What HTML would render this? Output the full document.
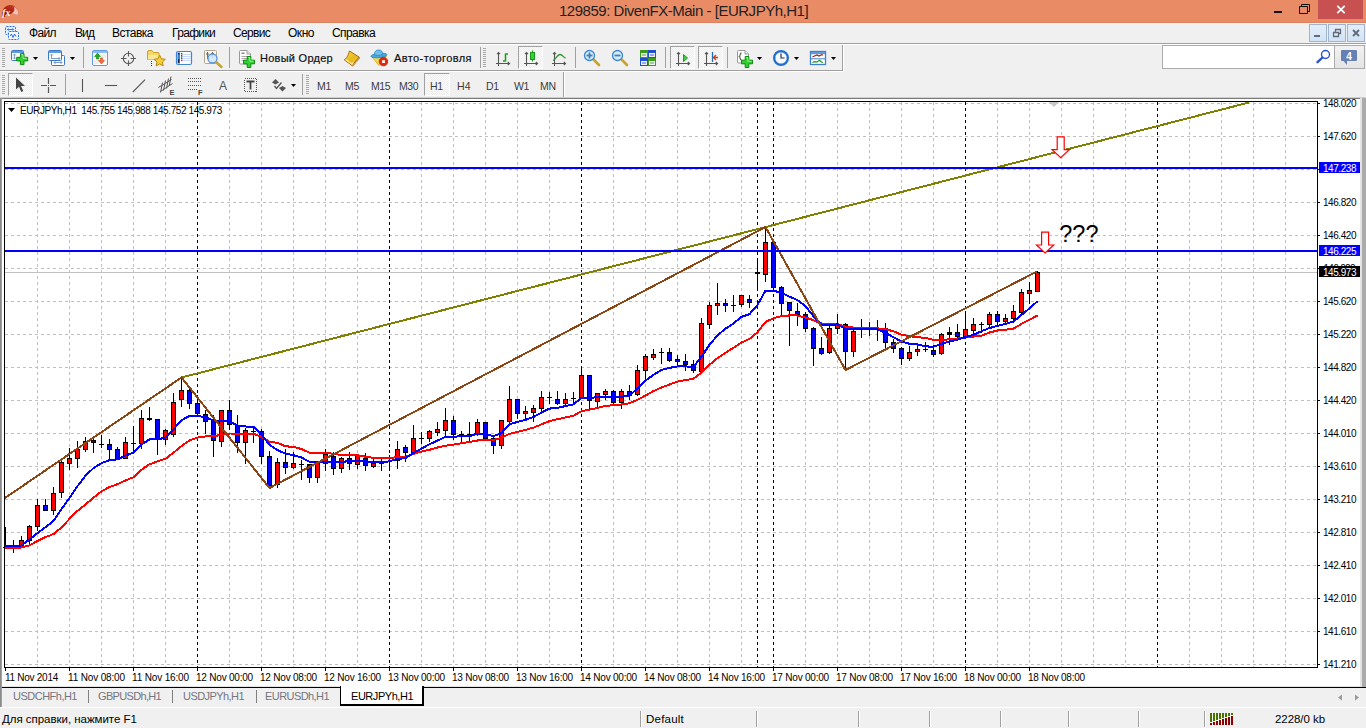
<!DOCTYPE html><html><head><meta charset="utf-8"><title>129859: DivenFX-Main - [EURJPYh,H1]</title><style>
*{box-sizing:border-box;margin:0;padding:0}
html,body{width:1366px;height:728px;overflow:hidden;background:#f0f0f0;font-family:"Liberation Sans",sans-serif;}
.abs{position:absolute}
.t{position:absolute;white-space:nowrap;line-height:1;color:#000}
#title{left:0;top:0;width:1366px;height:23px;background:#e98c66}
.menu{font-size:12px;top:27px}
.tf{font-size:10.5px;color:#3c3c3c;top:81px}
.ax{font-size:10px;letter-spacing:0px}
.tab{font-size:11px;color:#75757f;top:691px}
.pressed{position:absolute;background-color:#fff;background-image:linear-gradient(45deg,#ebebeb 25%,transparent 25%,transparent 75%,#ebebeb 75%),linear-gradient(45deg,#ebebeb 25%,transparent 25%,transparent 75%,#ebebeb 75%);background-size:2px 2px;background-position:0 0,1px 1px;border-top:1px solid #a0a0a0;border-left:1px solid #a0a0a0;border-right:1px solid #fff;border-bottom:1px solid #fff}
.vsep{position:absolute;width:1px;background:#a0a0a0}
.grip{position:absolute;width:3px;background:repeating-linear-gradient(to bottom,#a8a8a8 0,#a8a8a8 1px,transparent 1px,transparent 2px)}
</style></head><body>
<div id="title" class="abs"></div>
<div class="t" style="letter-spacing:-0.48px;left:559px;top:3px;font-size:15px;color:#222">129859: DivenFX-Main - [EURJPYh,H1]</div>
<svg class="abs" style="left:1px;top:4px" width="19" height="15" viewBox="0 0 19 15"><defs><linearGradient id="lg1" x1="0" y1="1" x2="1" y2="0"><stop offset="0" stop-color="#7a1006"/><stop offset=".6" stop-color="#b82a18"/><stop offset="1" stop-color="#cc4030"/></linearGradient></defs><path d="M1.500 12.500C.3 6 4 1 9 1c4.500 0 8 3.500 8.200 7.500c.1 1.500 -.4 2.500 -1.200 2.500c-3 -1.500 -7 -1.500 -9.500 -.5c-1.500 1 -2.500 3 -4 2.500z" fill="url(#lg1)"/><path d="M12.500 2.200c2.800 1.300 4.600 3.800 4.700 6.300c.1 1.500 -.4 2.500 -1.200 2.500c-2 -1 -4 -1.300 -5.800 -1.300c3 -1.500 4.300 -4.500 2.300 -7.500z" fill="#f6cfc6" opacity=".92"/><text x="1.300" y="11.500" font-size="9.500" font-style="italic" font-weight="bold" font-family="Liberation Serif,serif" fill="#fff">fx</text></svg>
<div class="abs" style="left:0;top:22px;width:1366px;height:1px;background:#d9825f"></div>
<div class="abs" style="left:1318px;top:0;width:45px;height:19px;background:#c75050"></div>
<svg class="abs" style="left:1270px;top:0" width="96" height="20" viewBox="0 0 96 20"><rect x="4" y="11" width="8" height="2" fill="#111"/><path d="M29.5 6.5 h8 v7 h-8 z M31.5 6.5 v-2 h8 v7 h-2" fill="none" stroke="#111" stroke-width="1"/><path d="M67.3 5.8 l7.4 7.4 M74.7 5.800 l-7.4 7.4" stroke="#fff" stroke-width="1.7" fill="none"/></svg>
<div class="abs" style="left:0;top:43px;width:1366px;height:1px;background:#a0a0a0"></div>
<div class="abs" style="left:0;top:44px;width:1366px;height:1px;background:#fff"></div>
<svg class="abs" style="left:4px;top:24px" width="18" height="18" viewBox="0 0 18 18"><rect x="1.5" y="2.5" width="10" height="8" rx="1" fill="#e4eefb" stroke="#2f6fd8" stroke-dasharray="2 1"/><path d="M3.500 5.500h6M4.500 4.500l-1 1l1 1M8.500 4.500l1 1l-1 1" stroke="#2f6fd8" fill="none" stroke-width=".9"/><rect x="4.5" y="7.5" width="10" height="8" rx="1" fill="#f4f8ff" stroke="#2f6fd8" stroke-dasharray="2 1"/><path d="M6 12 l1.500 -2 l1.500 3.500 l1.500 -3.500 l1.500 2.500" stroke="#2f6fd8" fill="none" stroke-width="1"/></svg>
<div class="t menu" style="letter-spacing:-0.63px;left:29px">Файл</div>
<div class="t menu" style="letter-spacing:-0.91px;left:75px">Вид</div>
<div class="t menu" style="letter-spacing:-0.52px;left:112px">Вставка</div>
<div class="t menu" style="letter-spacing:-0.67px;left:172px">Графики</div>
<div class="t menu" style="letter-spacing:-0.68px;left:233px">Сервис</div>
<div class="t menu" style="letter-spacing:-0.47px;left:288px">Окно</div>
<div class="t menu" style="letter-spacing:-0.58px;left:332px">Справка</div>
<div class="abs" style="left:1309px;top:24px;width:18px;height:18px;border:1px solid #9fb4cf;background:linear-gradient(#e4eefa,#d3e3f5)"></div>
<div class="abs" style="left:1328px;top:24px;width:18px;height:18px;border:1px solid #9fb4cf;background:linear-gradient(#e4eefa,#d3e3f5)"></div>
<div class="abs" style="left:1347px;top:24px;width:18px;height:18px;border:1px solid #9fb4cf;background:linear-gradient(#e4eefa,#d3e3f5)"></div>
<svg class="abs" style="left:1309px;top:24px" width="57" height="18" viewBox="0 0 57 18"><rect x="5" y="11" width="6" height="2" fill="#5f6b7a"/><path d="M24.500 8.500 h5 v4 h-5 z M26.500 8 v-2.500 h5 v4 h-2" fill="none" stroke="#5f6b7a" stroke-width="1.3"/><path d="M44 6 l6 6 M50 6 l-6 6" stroke="#5f6b7a" stroke-width="1.8"/></svg>
<div class="abs" style="left:0;top:70px;width:843px;height:1px;background:#a0a0a0"></div>
<div class="abs" style="left:0;top:71px;width:843px;height:1px;background:#fff"></div>
<div class="abs" style="left:842px;top:45px;width:1px;height:26px;background:#a0a0a0"></div>
<div class="abs" style="left:843px;top:45px;width:1px;height:27px;background:#fff"></div>
<div class="grip" style="left:2px;top:48px;height:20px"></div>
<div class="grip" style="left:483px;top:48px;height:20px"></div>
<div class="vsep" style="left:83px;top:47px;height:21px"></div>
<div class="vsep" style="left:229px;top:47px;height:21px"></div>
<div class="vsep" style="left:480px;top:47px;height:21px"></div>
<div class="vsep" style="left:575px;top:47px;height:21px"></div>
<div class="vsep" style="left:665px;top:47px;height:21px"></div>
<div class="vsep" style="left:727px;top:47px;height:21px"></div>
<div class="pressed" style="left:518px;top:46px;width:25px;height:23px"></div>
<div class="pressed" style="left:670px;top:46px;width:25px;height:23px"></div>
<div class="pressed" style="left:698px;top:46px;width:25px;height:23px"></div>
<svg class="abs" style="left:10px;top:49px" width="20" height="18" viewBox="0 0 20 18"><rect x="1.500" y="1.500" width="12" height="10" rx="1" fill="#fff" stroke="#3b78c3"/><rect x="2" y="2" width="11" height="2" fill="#5c9be0"/><path d="M4.500 5v5M3 6.500l1.500 -1.500l1.500 1.500M3 8.500l1.500 1.500l1.500 -1.500" stroke="#7f9fc0" fill="none"/><path d="M10.4 4.6 h3.600 v3.700 h3.700 v3.600 h-3.700 v3.700 h-3.600 v-3.700 h-3.700 v-3.600 h3.700z" fill="#2fd02f" stroke="#0d8a0d" stroke-width="1" stroke-linejoin="round"/><path d="M11.4 5.6 h1.600 v3.700 h3.700" fill="none" stroke="#9df09d" stroke-width="1"/></svg>
<svg class="abs" style="left:33px;top:57px" width="6" height="4" viewBox="0 0 6 4"><path d="M0 0h5l-2.500 3z" fill="#000"/></svg>
<svg class="abs" style="left:47px;top:49px" width="20" height="18" viewBox="0 0 20 18"><rect x="4.500" y="6.500" width="13" height="10" rx="1" fill="#fff" stroke="#3b78c3"/><path d="M7 13.500h8M8.500 12l-1.500 1.500l1.500 1.500M13.500 12l1.500 1.500l-1.500 1.500" stroke="#7f9fc0" fill="none"/><rect x="1.500" y="1.500" width="13" height="10" rx="1" fill="#fff" stroke="#3b78c3"/><rect x="2" y="2" width="12" height="2" fill="#5c9be0"/><path d="M4.500 5v5M3 6.500l1.500 -1.500l1.500 1.500M5 9.500h8M11.500 8l1.500 1.500l-1.500 1.500" stroke="#7f9fc0" fill="none"/></svg>
<svg class="abs" style="left:70px;top:57px" width="6" height="4" viewBox="0 0 6 4"><path d="M0 0h5l-2.500 3z" fill="#000"/></svg>
<svg class="abs" style="left:91px;top:49px" width="18" height="18" viewBox="0 0 18 18"><rect x="1.500" y="1.500" width="15" height="15" rx="1.500" fill="#fff" stroke="#5c9be0"/><rect x="2" y="2" width="14" height="2" fill="#8bbcf0"/><path d="M10 6h5M10 8h5M3 12h5M3 14h5" stroke="#ddd"/><path d="M6.500 4l3 3.500h-1.800v2.500h-2.400v-2.500h-1.800z" fill="#22aa22" stroke="#118811" stroke-width=".6"/><path d="M10.500 15l3 -3.500h-1.800v-2.500h-2.400v2.500h-1.800z" fill="#f07040" stroke="#d04010" stroke-width=".6"/></svg>
<svg class="abs" style="left:120px;top:50px" width="18" height="17" viewBox="0 0 18 17"><circle cx="8.500" cy="8.500" r="5.200" fill="none" stroke="#5a5a5a" stroke-width="1.100"/><path d="M8.500 1v5.500M8.500 10.500v5.500M1 8.500h5.500M10.500 8.500h5.500" stroke="#5a5a5a" stroke-width="1.100"/></svg>
<svg class="abs" style="left:146px;top:49px" width="22" height="19" viewBox="0 0 22 19"><path d="M1.500 10.500v-7.500a1.500 1.500 0 0 1 1.500 -1.500h3l1.500 2h4.500a1 1 0 0 1 1 1v6z" fill="#f6d667" stroke="#c9a227"/><path d="M2 6h10.500v4.500h-10.500z" fill="#fbe89a"/><path d="M5.500 12v5" stroke="#333" stroke-dasharray="1 1"/><path d="M13.700 6.200l1.700 3.600 3.900 .5 -2.900 2.700 .8 3.900 -3.500 -2 -3.500 2 .8 -3.900 -2.900 -2.700 3.900 -.5z" fill="#f5d03a" stroke="#b8860b" stroke-width="1" stroke-linejoin="round"/></svg>
<svg class="abs" style="left:175px;top:50px" width="19" height="16" viewBox="0 0 19 16"><rect x="1.500" y="1.500" width="15" height="13" rx="1.500" fill="#fff" stroke="#3f86d8" stroke-width="1.200"/><rect x="2.500" y="2.500" width="2.500" height="11" fill="#3f7fd8"/><path d="M6 4.500h10M6 6.500h10M6 8.500h10M6 10.500h10" stroke="#c8d8f8"/><rect x="6" y="3" width="1.300" height="1.300" fill="#e00"/><rect x="6" y="5.200" width="1.300" height="1.300" fill="#222"/><rect x="6" y="7.400" width="1.300" height="1.300" fill="#222"/><rect x="6" y="9.600" width="1.300" height="1.300" fill="#e00"/><rect x="3" y="3" width="1.200" height="1.200" fill="#111"/><rect x="3" y="9" width="1.200" height="4" fill="#223"/></svg>
<svg class="abs" style="left:203px;top:49px" width="21" height="20" viewBox="0 0 21 20"><rect x="1.500" y="1.500" width="12" height="13" rx="1" fill="#faf6ea" stroke="#b0a890"/><path d="M4.500 3v7M9.500 3v6M3 5h3M8 4.500h3" stroke="#667" stroke-width="1"/><circle cx="9.500" cy="9.500" r="4.500" fill="#cfe4f8" fill-opacity=".85" stroke="#5b95dd" stroke-width="1.300"/><path d="M13 13l5.500 5" stroke="#c9a227" stroke-width="2.400" stroke-linecap="round"/></svg>
<svg class="abs" style="left:238px;top:49px" width="20" height="20" viewBox="0 0 20 20"><path d="M1.500 2.500a1 1 0 0 1 1 -1h6.500l3.500 3.500v9a1 1 0 0 1 -1 1h-9a1 1 0 0 1 -1 -1z" fill="#fff" stroke="#999"/><path d="M9 1.500v3.500h3.500" fill="#eee" stroke="#999"/><rect x="3.500" y="3.500" width="3" height="1.500" fill="#888"/><path d="M3.500 7.500h7M3.500 9.500h7M3.500 11.500h4" stroke="#aaa"/><path d="M9.2 7.5 h3.600 v3.700 h3.700 v3.600 h-3.700 v3.700 h-3.600 v-3.700 h-3.700 v-3.600 h3.700z" fill="#2fd02f" stroke="#0d8a0d" stroke-width="1" stroke-linejoin="round"/><path d="M10.2 8.5 h1.600 v3.700 h3.700" fill="none" stroke="#9df09d" stroke-width="1"/></svg>
<svg class="abs" style="left:343px;top:50px" width="18" height="17" viewBox="0 0 18 17"><defs><linearGradient id="bk" x1="0" y1="0" x2="1" y2="1"><stop offset="0" stop-color="#f8dc50"/><stop offset=".55" stop-color="#e8b818"/><stop offset="1" stop-color="#f4d860"/></linearGradient></defs><path d="M16 7L9 15.500l.9 .7L16.800 7.900z" fill="#e8d8a0" stroke="#a86a10" stroke-width=".7"/><path d="M6.500 1L16 7L9 15.500L1.200 9.800C3.500 8.500 5 6 6.500 1z" fill="url(#bk)" stroke="#a86a10" stroke-width="1" stroke-linejoin="round"/><path d="M2.600 9.600L9 14.200L10.200 12.700" fill="none" stroke="#fbeaa0" stroke-width="1.200"/></svg>
<svg class="abs" style="left:370px;top:49px" width="20" height="19" viewBox="0 0 20 19"><defs><linearGradient id="at" x1="0" y1="0" x2="1" y2="0"><stop offset="0" stop-color="#fbe870"/><stop offset="1" stop-color="#e8b820"/></linearGradient></defs><path d="M1.500 7.500L16.500 7.500L9 16.500z" fill="url(#at)" stroke="#d8a820" stroke-width=".8" stroke-linejoin="round"/><ellipse cx="8.900" cy="6.500" rx="8" ry="2.200" fill="#4aa6dc" stroke="#2a88c0" stroke-width=".8" transform="rotate(-6 8.900 6.200)"/><path d="M4.600 5.800C4.400 1.500 7 .9 8.800 1.100C11 .8 12.600 2.200 12.400 5.300C10 6.800 7 6.800 4.600 5.800z" fill="#6cc0ec" stroke="#2a88c0" stroke-width=".8"/><circle cx="13.500" cy="12.600" r="4.200" fill="#e82808" stroke="#b81808" stroke-width=".8"/><rect x="12.100" y="11.200" width="2.800" height="2.800" fill="#fff"/></svg>
<svg class="abs" style="left:495px;top:50px" width="17" height="17" viewBox="0 0 17 17"><path d="M3.500 2.500v13.500M2 4.200l1.500 -1.700l1.500 1.700M1 13.500h13.500M12.800 12l1.700 1.500l-1.700 1.500" stroke="#555" stroke-width="1.100" fill="none"/><path d="M10.500 3.500v8M10.500 4h2.500M8 11h2.500" stroke="#1a9a1a" stroke-width="1.500" fill="none"/></svg>
<svg class="abs" style="left:523px;top:49px" width="17" height="18" viewBox="0 0 17 18"><path d="M3.500 3.500v13.500M2 5.200l1.500 -1.700l1.500 1.700M1 14.500h13.500M12.800 13l1.700 1.500l-1.700 1.500" stroke="#555" stroke-width="1.100" fill="none"/><path d="M9.500 1.500v11" stroke="#1a9a1a" stroke-width="1.200"/><rect x="7.500" y="3.500" width="4" height="7" fill="#38d038" stroke="#1a9a1a"/></svg>
<svg class="abs" style="left:551px;top:50px" width="17" height="17" viewBox="0 0 17 17"><path d="M3.500 2.500v13.500M2 4.200l1.500 -1.700l1.500 1.700M1 13.500h13.500M12.800 12l1.700 1.500l-1.700 1.500" stroke="#555" stroke-width="1.100" fill="none"/><path d="M2 10.500c3 -1 4 -6 7 -6c2.500 0 3.500 3 5.500 3.500" stroke="#2a9a2a" stroke-width="1.300" fill="none"/></svg>
<svg class="abs" style="left:583px;top:49px" width="18" height="18" viewBox="0 0 18 18"><path d="M10.500 10.500l5.500 5.500" stroke="#c9a227" stroke-width="2.600" stroke-linecap="round"/><circle cx="6.500" cy="6.500" r="5" fill="#d6ecfb" stroke="#3b86d8" stroke-width="1.300"/><path d="M3.500 6.500h6" stroke="#3f7fb8" stroke-width="1.800"/><path d="M6.500 3.500v6" stroke="#3f7fb8" stroke-width="1.800"/></svg>
<svg class="abs" style="left:611px;top:49px" width="18" height="18" viewBox="0 0 18 18"><path d="M10.500 10.500l5.500 5.500" stroke="#c9a227" stroke-width="2.600" stroke-linecap="round"/><circle cx="6.500" cy="6.500" r="5" fill="#d6ecfb" stroke="#3b86d8" stroke-width="1.300"/><path d="M3.500 6.500h6" stroke="#3f7fb8" stroke-width="1.800"/></svg>
<svg class="abs" style="left:640px;top:50px" width="16" height="16" viewBox="0 0 16 16"><rect x="0" y="0" width="8" height="8" fill="#3a9a1a"/><rect x="1.5" y="3.5" width="5" height="3" fill="#dfe8ff" fill-opacity=".6" stroke="#fff" stroke-opacity=".9"/><rect x="8" y="0" width="8" height="8" fill="#1f4fd0"/><rect x="9.5" y="3.5" width="5" height="3" fill="#dfe8ff" fill-opacity=".6" stroke="#fff" stroke-opacity=".9"/><rect x="0" y="8" width="8" height="8" fill="#1f4fd0"/><rect x="1.5" y="11.5" width="5" height="3" fill="#dfe8ff" fill-opacity=".6" stroke="#fff" stroke-opacity=".9"/><rect x="8" y="8" width="8" height="8" fill="#3a9a1a"/><rect x="9.5" y="11.5" width="5" height="3" fill="#dfe8ff" fill-opacity=".6" stroke="#fff" stroke-opacity=".9"/></svg>
<svg class="abs" style="left:675px;top:50px" width="17" height="17" viewBox="0 0 17 17"><path d="M3.500 2.500v13.500M2 4.200l1.500 -1.700l1.500 1.700M1 13.500h13.500M12.800 12l1.700 1.500l-1.700 1.500" stroke="#555" stroke-width="1.100" fill="none"/><path d="M8.500 4.500v7l4 -3.500z" fill="#44d044" stroke="#1a9a1a" stroke-linejoin="round"/></svg>
<svg class="abs" style="left:703px;top:50px" width="17" height="17" viewBox="0 0 17 17"><path d="M3.500 2.500v13.500M2 4.200l1.500 -1.700l1.500 1.700M1 13.500h13.500M12.800 12l1.700 1.500l-1.700 1.500" stroke="#555" stroke-width="1.100" fill="none"/><path d="M9.500 2v10" stroke="#1f6fb0" stroke-width="1.300"/><path d="M10.500 7.500h4.500M13 5l-2.500 2.500l2.500 2.500" stroke="#d04010" stroke-width="1.300" fill="none"/></svg>
<svg class="abs" style="left:736px;top:49px" width="20" height="20" viewBox="0 0 20 20"><path d="M1.500 2.500a1 1 0 0 1 1 -1h6.500l3.500 3.500v8a1 1 0 0 1 -1 1h-9a1 1 0 0 1 -1 -1z" fill="#fff" stroke="#999"/><path d="M9 1.500v3.500h3.500" fill="#eee" stroke="#999"/><path d="M5.500 4c-2 0 -1 3 -2 3.500c1 .5 0 3.500 2 3.500" stroke="#665" fill="none" stroke-width="1.300"/><path d="M9.2 7.5 h3.600 v3.700 h3.700 v3.600 h-3.700 v3.700 h-3.600 v-3.700 h-3.700 v-3.600 h3.700z" fill="#2fd02f" stroke="#0d8a0d" stroke-width="1" stroke-linejoin="round"/><path d="M10.2 8.5 h1.600 v3.700 h3.700" fill="none" stroke="#9df09d" stroke-width="1"/></svg>
<svg class="abs" style="left:757px;top:57px" width="6" height="4" viewBox="0 0 6 4"><path d="M0 0h5l-2.500 3z" fill="#000"/></svg>
<svg class="abs" style="left:772px;top:49px" width="18" height="18" viewBox="0 0 18 18"><circle cx="9" cy="9" r="6.900" fill="#f4f8ff" stroke="#1f6fd0" stroke-width="2.200"/><path d="M9 4.500v4.500h3.500" stroke="#333" stroke-width="1.200" fill="none"/><path d="M9 3v1M9 14v1M3 9h1M14 9h1" stroke="#99a"/></svg>
<svg class="abs" style="left:794px;top:57px" width="6" height="4" viewBox="0 0 6 4"><path d="M0 0h5l-2.500 3z" fill="#000"/></svg>
<svg class="abs" style="left:809px;top:50px" width="18" height="16" viewBox="0 0 18 16"><rect x="1.500" y="1.500" width="15" height="13" fill="#fff" stroke="#3f7fd0" stroke-width="1.300"/><rect x="2" y="2" width="14" height="2.200" fill="#5c9be0"/><path d="M2 8.800h14" stroke="#3f7fd0"/><path d="M3.500 7l2 -1l2.500 -1l2 1l2.500 -1.200l1.500 0" stroke="#a02010" stroke-width="1.200" fill="none"/><path d="M3.500 12.500l2 -.8l2 .5l3 -2l2 1.800l1.500 .3" stroke="#1a9a1a" stroke-width="1.200" fill="none"/></svg>
<svg class="abs" style="left:831px;top:57px" width="6" height="4" viewBox="0 0 6 4"><path d="M0 0h5l-2.500 3z" fill="#000"/></svg>
<div class="t" style="letter-spacing:0.26px;left:260px;top:53px;font-size:11px;-webkit-text-stroke:0.2px #111;color:#111">Новый Ордер</div>
<div class="t" style="letter-spacing:0.41px;left:394px;top:53px;font-size:11px;-webkit-text-stroke:0.2px #111;color:#111">Авто-торговля</div>
<div class="abs" style="left:1162px;top:45px;width:173px;height:24px;background:#fff;border:1px solid #ababab"></div>
<div class="abs" style="left:1334px;top:45px;width:31px;height:24px;background:linear-gradient(#f2f2f2,#e4e4e4);border:1px solid #ababab"></div>
<svg class="abs" style="left:1314px;top:48px" width="18" height="18" viewBox="0 0 18 18"><circle cx="11.500" cy="6.500" r="4" fill="#fff" stroke="#2a55c8" stroke-width="1.400"/><path d="M8.500 9.500 L3.500 14.200" stroke="#2a55c8" stroke-width="2.400" stroke-linecap="round"/></svg>
<svg class="abs" style="left:1340px;top:49px" width="19" height="18" viewBox="0 0 19 18"><path d="M2 1 h14 a1 1 0 0 1 1 1 v9 a1 1 0 0 1 -1 1 h-9 l0 4 l-3.500 -4 h-1.500 a1 1 0 0 1 -1 -1 v-9 a1 1 0 0 1 1 -1z" fill="#6680b3"/><text x="9" y="10.500" font-size="10" font-weight="bold" text-anchor="middle" fill="#fff" font-family="Liberation Sans,sans-serif">4</text></svg>
<div class="abs" style="left:563px;top:72px;width:1px;height:25px;background:#a0a0a0"></div>
<div class="abs" style="left:564px;top:72px;width:1px;height:25px;background:#fff"></div>
<div class="grip" style="left:2px;top:75px;height:20px"></div>
<div class="grip" style="left:306px;top:75px;height:20px"></div>
<div class="vsep" style="left:65px;top:74px;height:21px"></div>
<div class="vsep" style="left:302px;top:74px;height:21px"></div>
<div class="pressed" style="left:8px;top:73px;width:25px;height:23px"></div>
<div class="pressed" style="left:424px;top:73px;width:26px;height:23px"></div>
<svg class="abs" style="left:14px;top:76px" width="12" height="18" viewBox="0 0 12 18"><path d="M2 1.500v12l3 -2.800l2.300 5.300l2 -.9l-2.300 -5.100h4z" fill="#444"/></svg>
<svg class="abs" style="left:40px;top:77px" width="18" height="18" viewBox="0 0 18 18"><path d="M8.500 1v6M8.500 10v6M1 8.500h6M10 8.500h6" stroke="#555" stroke-width="1.200"/><rect x="8" y="8" width="1" height="1" fill="#555"/></svg>
<svg class="abs" style="left:80px;top:78px" width="5" height="16" viewBox="0 0 5 16"><path d="M2.500 1v13" stroke="#555" stroke-width="1.100"/></svg>
<svg class="abs" style="left:104px;top:83px" width="15" height="5" viewBox="0 0 15 5"><path d="M1 2.500h12" stroke="#555" stroke-width="1.100"/></svg>
<svg class="abs" style="left:131px;top:78px" width="16" height="16" viewBox="0 0 16 16"><path d="M1.800 14l12.300 -12.300" stroke="#555" stroke-width="1.100"/></svg>
<svg class="abs" style="left:157px;top:76px" width="20" height="20" viewBox="0 0 20 20"><path d="M1.500 11.500l13 -8M3.500 15.500l12 -8M5.500 6.500l-2 10M8.500 4.500l-2 10M11.500 2.500l-2 10M14 .5l-1.800 9.500" stroke="#555" stroke-width="1" fill="none"/><text x="12.500" y="18.500" font-size="7.500" font-weight="bold" fill="#444" font-family="Liberation Sans,sans-serif">E</text></svg>
<svg class="abs" style="left:186px;top:76px" width="20" height="20" viewBox="0 0 20 20"><path d="M2 2.500h13M2 5.500h13M2 9.500h13M2 13.500h9" stroke="#555" stroke-width="1" stroke-dasharray="1 1" shape-rendering="crispEdges"/><text x="12" y="18.500" font-size="7.500" font-weight="bold" fill="#444" font-family="Liberation Sans,sans-serif">F</text></svg>
<svg class="abs" style="left:216px;top:77px" width="14" height="16" viewBox="0 0 14 16"><text x="7" y="12.800" font-size="12" text-anchor="middle" fill="#555" font-family="Liberation Sans,sans-serif">A</text></svg>
<svg class="abs" style="left:243px;top:77px" width="16" height="17" viewBox="0 0 16 17"><rect x="1.500" y="1.500" width="12" height="13" fill="none" stroke="#555" stroke-width="1" stroke-dasharray="1 1" shape-rendering="crispEdges"/><path d="M3.500 4.500h8M7.500 4.500v8" stroke="#444" stroke-width="1.800" fill="none"/></svg>
<svg class="abs" style="left:270px;top:77px" width="18" height="17" viewBox="0 0 18 17"><path d="M2 5.500l3.500 -3.500l3.500 3.500l-3.500 2z" fill="#555"/><path d="M9 11l3.500 -2l3.500 2l-3.500 3.500z" fill="#555"/><path d="M4.500 9l2 2.500l5 -6" stroke="#555" stroke-width="1.300" fill="none"/></svg>
<svg class="abs" style="left:291px;top:84px" width="6" height="4" viewBox="0 0 6 4"><path d="M0 0h5l-2.500 3z" fill="#000"/></svg>
<div class="t tf" style="letter-spacing:-0.3px;left:317px">M1</div>
<div class="t tf" style="letter-spacing:-0.3px;left:345px">M5</div>
<div class="t tf" style="letter-spacing:-0.48px;left:371px">M15</div>
<div class="t tf" style="letter-spacing:-0.48px;left:399px">M30</div>
<div class="t tf" style="letter-spacing:-0.22px;left:430px">H1</div>
<div class="t tf" style="letter-spacing:0.28px;left:457px">H4</div>
<div class="t tf" style="letter-spacing:-0.22px;left:486px">D1</div>
<div class="t tf" style="letter-spacing:-0.38px;left:514px">W1</div>
<div class="t tf" style="letter-spacing:-0.17px;left:540px">MN</div>
<div class="abs" style="left:0;top:97px;width:1366px;height:610px;background:#ababab"></div>
<div class="abs" style="left:0;top:97px;width:1366px;height:1px;background:#d0d0d0"></div>
<div class="abs" style="left:0;top:98px;width:1360px;height:1px;background:#7a7a7a"></div>
<div class="abs" style="left:0px;top:98px;width:2px;height:609px;background:linear-gradient(90deg,#8a8a8a 50%,#a0a0a0 50%)"></div>
<div class="abs" style="left:2px;top:99px;width:1358px;height:588px;background:#fff"></div>
<div class="abs" style="left:1360px;top:98px;width:2px;height:589px;background:#e3e3e3"></div>
<div class="abs" style="left:2px;top:686px;width:1358px;height:1px;background:#e3e3e3"></div>
<div class="abs" style="left:2px;top:687px;width:1364px;height:1px;background:#000"></div>
<div class="abs" style="left:2px;top:688px;width:1364px;height:19px;background:#f0f0f0"></div>
<div class="abs" style="left:0px;top:707px;width:1366px;height:21px;background:#f0f0f0"></div>
<svg class="abs" style="left:0;top:99px" width="1362" height="589" viewBox="0 99 1362 589" font-family="Liberation Sans, sans-serif"><path d="M37.5 102V667M69.5 102V667M101.5 102V667M133.5 102V667M165.5 102V667M229.5 102V667M261.5 102V667M293.5 102V667M325.5 102V667M357.5 102V667M421.5 102V667M453.5 102V667M485.5 102V667M517.5 102V667M549.5 102V667M613.5 102V667M645.5 102V667M677.5 102V667M709.5 102V667M741.5 102V667M805.5 102V667M837.5 102V667M869.5 102V667M901.5 102V667M933.5 102V667M997.5 102V667M1029.5 102V667M1061.5 102V667M1093.5 102V667M1125.5 102V667M1189.5 102V667M1221.5 102V667M1253.5 102V667M1285.5 102V667M5 103.5H1317M5 136.5H1317M5 169.5H1317M5 202.5H1317M5 235.5H1317M5 268.5H1317M5 301.5H1317M5 334.5H1317M5 367.5H1317M5 400.5H1317M5 433.5H1317M5 466.5H1317M5 499.5H1317M5 532.5H1317M5 565.5H1317M5 598.5H1317M5 631.5H1317M5 664.5H1317" stroke="#c0c0c0" stroke-width="1" stroke-dasharray="3 3" fill="none" shape-rendering="crispEdges"/><path d="M197.5 102V667M389.5 102V667M581.5 102V667M757.5 102V667M773.5 102V667M965.5 102V667M1157.5 102V667" stroke="#000" stroke-width="1" stroke-dasharray="3 3" fill="none" shape-rendering="crispEdges"/><path d="M5 272.500H1317" stroke="#c0c0c0" stroke-width="1" shape-rendering="crispEdges"/><path d="M5.5 527V548M13.5 540V553M21.5 536V548M29.5 525V545M37.5 499V531M45.5 499V511M53.5 487V515M61.5 458V498M69.5 448V470M77.5 441V468M85.5 437V452M93.5 439V453M101.5 435V448M109.5 439V460M117.5 447V459M125.5 437V459M133.5 426V452M141.5 410V449M149.5 407V421M157.5 419V455M165.5 429V445M173.5 393V437M181.5 378V407M189.5 389V409M197.5 395V417M205.5 410V434M213.5 415V457M221.5 410V447M229.5 400V430M237.5 415V453M245.5 428V464M253.5 428V443M261.5 429V464M269.5 451V489M277.5 458V488M285.5 449V474M293.5 452V469M301.5 460V480M309.5 464V483M317.5 462V483M325.5 449V471M333.5 452V475M341.5 457V473M349.5 452V470M357.5 454V469M365.5 453V471M373.5 459V468M381.5 459V471M389.5 455V471M397.5 441V469M405.5 445V462M413.5 425V455M421.5 432V444M429.5 430V442M437.5 422V436M445.5 408V437M453.5 416V440M461.5 431V443M469.5 422V442M477.5 419V436M485.5 422V440M493.5 437V454M501.5 420V449M509.5 386V425M517.5 399V419M525.5 406V419M533.5 405V422M541.5 391V413M549.5 392V404M557.5 391V405M565.5 393V406M573.5 392V404M581.5 366V399M589.5 375V410M597.5 393V408M605.5 389V400M613.5 390V405M621.5 389V409M629.5 385V400M637.5 365V396M645.5 354V381M653.5 349V360M661.5 348V364M669.5 348V362M677.5 355V366M685.5 354V371M693.5 360V373M701.5 318V372M709.5 302V329M717.5 283V315M725.5 299V312M733.5 295V312M741.5 295V307M749.5 295V308M757.5 261V290M765.5 228V282M773.5 241V291M781.5 286V317M789.5 302V346M797.5 303V326M805.5 312V332M813.5 327V366M821.5 337V355M829.5 326V354M837.5 314V334M845.5 323V371M853.5 329V357M861.5 319V338M869.5 322V336M877.5 320V341M885.5 323V349M893.5 339V353M901.5 347V365M909.5 346V361M917.5 346V356M925.5 342V352M933.5 345V357M941.5 333V355M949.5 327V345M957.5 324V338M965.5 311V337M973.5 318V335M981.5 322V333M989.5 312V327M997.5 311V327M1005.5 314V325M1013.5 305V320M1021.5 289V315M1029.5 282V304M1037.5 271V292" stroke="#000" stroke-width="1" fill="none" shape-rendering="crispEdges"/><path d="M3 547h5v1h-5zM99 444h5v1h-5zM131 443h5v1h-5zM147 418h5v2h-5zM251 431h5v1h-5zM299 464h5v1h-5zM379 463h5v1h-5zM387 461h5v1h-5zM419 438h5v1h-5zM459 434h5v1h-5zM467 434h5v1h-5zM547 397h5v1h-5zM571 398h5v1h-5zM659 352h5v1h-5zM731 305h5v1h-5zM755 272h5v2h-5zM859 329h5v1h-5zM867 329h5v1h-5zM875 329h5v1h-5zM923 349h5v1h-5zM947 332h5v3h-5zM979 324h5v1h-5z" fill="#000" shape-rendering="crispEdges"/><g fill="#ff0000" stroke="#000" stroke-width="1" shape-rendering="crispEdges"><rect x="11.5" y="545.5" width="4" height="1"/><rect x="19.5" y="540.5" width="4" height="6"/><rect x="27.5" y="526.5" width="4" height="14"/><rect x="35.5" y="505.5" width="4" height="21"/><rect x="51.5" y="493.5" width="4" height="17"/><rect x="59.5" y="462.5" width="4" height="30"/><rect x="67.5" y="458.5" width="4" height="5"/><rect x="75.5" y="449.5" width="4" height="9"/><rect x="83.5" y="441.5" width="4" height="8"/><rect x="123.5" y="442.5" width="4" height="16"/><rect x="139.5" y="418.5" width="4" height="25"/><rect x="163.5" y="430.5" width="4" height="9"/><rect x="171.5" y="402.5" width="4" height="32"/><rect x="179.5" y="390.5" width="4" height="9"/><rect x="219.5" y="410.5" width="4" height="31"/><rect x="243.5" y="430.5" width="4" height="12"/><rect x="275.5" y="462.5" width="4" height="22"/><rect x="291.5" y="463.5" width="4" height="4"/><rect x="315.5" y="462.5" width="4" height="15"/><rect x="323.5" y="454.5" width="4" height="9"/><rect x="339.5" y="458.5" width="4" height="10"/><rect x="355.5" y="455.5" width="4" height="9"/><rect x="371.5" y="463.5" width="4" height="3"/><rect x="395.5" y="449.5" width="4" height="11"/><rect x="411.5" y="438.5" width="4" height="14"/><rect x="427.5" y="431.5" width="4" height="7"/><rect x="435.5" y="429.5" width="4" height="3"/><rect x="443.5" y="420.5" width="4" height="10"/><rect x="475.5" y="422.5" width="4" height="12"/><rect x="499.5" y="420.5" width="4" height="25"/><rect x="507.5" y="399.5" width="4" height="22"/><rect x="523.5" y="411.5" width="4" height="2"/><rect x="531.5" y="408.5" width="4" height="4"/><rect x="539.5" y="397.5" width="4" height="11"/><rect x="563.5" y="399.5" width="4" height="4"/><rect x="579.5" y="375.5" width="4" height="23"/><rect x="595.5" y="393.5" width="4" height="8"/><rect x="603.5" y="391.5" width="4" height="3"/><rect x="619.5" y="391.5" width="4" height="11"/><rect x="635.5" y="370.5" width="4" height="24"/><rect x="643.5" y="356.5" width="4" height="14"/><rect x="651.5" y="354.5" width="4" height="3"/><rect x="699.5" y="323.5" width="4" height="48"/><rect x="707.5" y="305.5" width="4" height="19"/><rect x="715.5" y="303.5" width="4" height="2"/><rect x="739.5" y="295.5" width="4" height="9"/><rect x="763.5" y="242.5" width="4" height="32"/><rect x="827.5" y="328.5" width="4" height="24"/><rect x="835.5" y="324.5" width="4" height="4"/><rect x="851.5" y="331.5" width="4" height="20"/><rect x="907.5" y="352.5" width="4" height="6"/><rect x="915.5" y="349.5" width="4" height="2"/><rect x="939.5" y="334.5" width="4" height="19"/><rect x="963.5" y="329.5" width="4" height="7"/><rect x="971.5" y="324.5" width="4" height="6"/><rect x="987.5" y="314.5" width="4" height="10"/><rect x="1003.5" y="318.5" width="4" height="3"/><rect x="1011.5" y="311.5" width="4" height="7"/><rect x="1019.5" y="292.5" width="4" height="20"/><rect x="1027.5" y="290.5" width="4" height="3"/><rect x="1035.5" y="272.5" width="4" height="19"/></g><g fill="#0000ff" stroke="#000" stroke-width="1" shape-rendering="crispEdges"><rect x="43.5" y="505.5" width="4" height="5"/><rect x="91.5" y="440.5" width="4" height="2"/><rect x="107.5" y="444.5" width="4" height="5"/><rect x="115.5" y="449.5" width="4" height="9"/><rect x="155.5" y="419.5" width="4" height="20"/><rect x="187.5" y="390.5" width="4" height="13"/><rect x="195.5" y="403.5" width="4" height="10"/><rect x="203.5" y="414.5" width="4" height="7"/><rect x="211.5" y="421.5" width="4" height="19"/><rect x="227.5" y="410.5" width="4" height="14"/><rect x="235.5" y="425.5" width="4" height="17"/><rect x="259.5" y="431.5" width="4" height="25"/><rect x="267.5" y="456.5" width="4" height="29"/><rect x="283.5" y="462.5" width="4" height="5"/><rect x="307.5" y="464.5" width="4" height="13"/><rect x="331.5" y="456.5" width="4" height="12"/><rect x="347.5" y="458.5" width="4" height="5"/><rect x="363.5" y="458.5" width="4" height="7"/><rect x="403.5" y="447.5" width="4" height="5"/><rect x="451.5" y="420.5" width="4" height="14"/><rect x="483.5" y="422.5" width="4" height="16"/><rect x="491.5" y="438.5" width="4" height="7"/><rect x="515.5" y="399.5" width="4" height="14"/><rect x="555.5" y="399.5" width="4" height="4"/><rect x="587.5" y="375.5" width="4" height="25"/><rect x="611.5" y="391.5" width="4" height="11"/><rect x="627.5" y="391.5" width="4" height="4"/><rect x="667.5" y="352.5" width="4" height="8"/><rect x="675.5" y="359.5" width="4" height="2"/><rect x="683.5" y="361.5" width="4" height="3"/><rect x="691.5" y="364.5" width="4" height="6"/><rect x="723.5" y="303.5" width="4" height="2"/><rect x="747.5" y="299.5" width="4" height="3"/><rect x="771.5" y="242.5" width="4" height="45"/><rect x="779.5" y="287.5" width="4" height="16"/><rect x="787.5" y="302.5" width="4" height="8"/><rect x="795.5" y="311.5" width="4" height="3"/><rect x="803.5" y="314.5" width="4" height="14"/><rect x="811.5" y="328.5" width="4" height="20"/><rect x="819.5" y="348.5" width="4" height="5"/><rect x="843.5" y="324.5" width="4" height="27"/><rect x="883.5" y="328.5" width="4" height="14"/><rect x="891.5" y="342.5" width="4" height="6"/><rect x="899.5" y="348.5" width="4" height="10"/><rect x="931.5" y="350.5" width="4" height="4"/><rect x="955.5" y="332.5" width="4" height="4"/><rect x="995.5" y="314.5" width="4" height="7"/></g><polyline points="5.0,548.0 21.4,547.5 29.3,545.5 37.6,540.9 45.3,537.2 53.6,534.0 61.5,527.4 69.6,518.8 77.5,510.9 85.7,504.3 93.6,497.7 101.7,491.1 109.6,487.0 117.5,484.2 125.6,480.4 133.8,477.1 141.7,469.7 149.2,464.4 157.6,461.4 165.5,458.8 173.6,452.6 181.5,446.0 189.6,440.5 197.5,437.6 205.6,436.4 213.6,436.1 221.5,434.9 229.6,433.5 237.5,433.6 245.6,433.6 253.5,433.8 261.5,436.9 269.5,441.7 277.5,442.8 285.6,446.4 293.5,446.7 301.4,449.1 309.5,452.6 317.4,452.8 325.5,453.0 333.5,453.8 341.5,455.0 349.5,455.2 357.6,455.2 365.5,456.7 373.4,457.9 381.5,458.2 389.4,458.2 397.5,457.0 405.5,456.7 413.5,453.8 421.5,451.6 429.6,449.8 437.5,447.5 445.4,445.7 453.5,444.6 461.4,443.2 469.5,442.0 477.5,440.5 485.5,439.8 493.5,439.8 501.4,437.9 509.5,433.9 517.4,432.0 525.5,429.9 533.5,427.6 541.5,424.4 549.5,421.1 557.6,419.2 565.5,417.4 573.4,415.8 581.5,411.1 589.4,409.7 597.5,407.9 605.5,406.0 613.5,405.2 621.5,404.5 629.6,403.2 637.5,399.9 645.6,395.5 653.5,391.1 661.6,387.4 669.5,384.5 677.5,381.6 685.5,380.1 693.5,378.6 701.6,372.7 709.5,364.7 717.6,358.0 725.5,352.9 733.4,347.8 741.5,342.6 749.5,338.9 757.5,332.3 765.5,322.0 773.6,318.2 781.5,316.2 789.6,315.4 797.5,315.5 805.6,317.6 813.5,320.2 821.5,323.5 829.5,323.5 837.5,323.9 845.5,326.9 853.5,327.6 861.6,327.9 869.5,327.9 877.6,328.4 885.5,329.1 893.5,331.3 901.5,334.7 909.5,336.1 917.6,337.2 925.5,337.9 933.6,339.8 941.5,339.8 949.4,339.4 957.5,338.6 965.5,337.3 973.5,336.6 981.5,335.6 989.6,332.5 997.6,330.5 1005.5,329.7 1013.6,328.6 1021.5,323.9 1029.6,319.8 1037.5,315.4" stroke="#ff0000" stroke-width="2" fill="none" stroke-linejoin="round" shape-rendering="crispEdges"/><polyline points="5.0,546.0 21.4,545.5 29.3,539.7 37.6,533.1 45.3,527.4 53.6,520.8 61.5,509.2 69.6,497.7 77.5,486.2 85.7,475.4 93.6,468.0 101.7,463.1 109.6,460.1 117.5,459.4 125.6,455.7 133.8,452.4 141.6,444.5 149.5,439.4 157.6,439.1 165.5,437.9 173.6,429.1 181.5,420.3 189.6,415.8 197.5,415.8 205.6,417.3 213.6,420.5 221.5,420.5 229.6,421.7 237.5,425.4 245.6,426.5 253.5,426.8 261.5,434.7 269.5,445.0 277.5,450.1 285.6,453.8 293.5,455.2 301.4,457.5 309.5,461.9 317.4,462.3 325.5,461.9 333.5,461.9 341.5,461.9 349.5,461.1 357.6,461.1 365.5,461.4 373.4,461.9 381.5,461.9 389.4,461.4 397.5,458.9 405.5,458.2 413.5,453.0 421.5,448.6 429.6,444.2 437.5,440.6 445.4,436.8 453.5,436.8 461.4,436.1 469.5,436.1 477.5,433.6 485.5,433.9 493.5,436.1 501.4,433.2 509.5,424.4 517.4,421.9 525.5,419.9 533.5,417.0 541.5,412.6 549.5,408.6 557.6,407.9 565.5,406.0 573.4,404.5 581.5,397.9 589.4,397.9 597.5,397.2 605.5,397.2 613.5,397.2 621.5,396.6 629.6,395.8 637.5,388.2 645.6,380.5 653.5,374.9 661.6,369.8 669.5,367.9 677.5,366.4 685.5,366.4 693.5,366.9 701.6,356.6 709.5,344.8 717.6,335.3 725.5,328.7 733.4,323.5 741.5,316.9 749.5,314.2 757.5,305.0 765.5,290.7 773.5,290.7 781.5,292.9 789.5,296.6 797.6,300.2 805.5,306.3 813.5,316.2 821.5,324.7 829.5,325.0 837.5,324.4 845.5,329.1 853.5,329.4 861.6,329.4 869.5,329.4 877.6,329.4 885.5,332.8 893.5,337.2 901.5,341.6 909.5,343.8 917.6,344.5 925.5,346.4 933.6,346.7 941.5,343.8 949.4,341.6 957.5,339.7 965.5,337.2 973.5,334.8 981.5,331.2 989.6,328.0 997.6,325.9 1005.5,323.9 1013.6,321.5 1021.5,314.9 1029.6,308.3 1037.5,301.2" stroke="#0000ff" stroke-width="2" fill="none" stroke-linejoin="round" shape-rendering="crispEdges"/><path d="M181.500 377.500L1249 102.500" stroke="#808000" stroke-width="2" fill="none" shape-rendering="crispEdges"/><path d="M5 498L181.500 377.500L269.500 488L765.500 227L845.500 370L1037 271.500" stroke="#8b4513" stroke-width="2" fill="none" stroke-linejoin="round" shape-rendering="crispEdges"/><path d="M5 168H1317M5 251H1317" stroke="#0000ff" stroke-width="2" shape-rendering="crispEdges"/><path d="M1041.6 232.2 h7 v12.800 h5.100 l-8.600 8 l-8.600 -8 h5.100 z" fill="#fff" stroke="#ff0000" stroke-width="1.200" stroke-linejoin="miter"/><path d="M1057.2 136.8 h7 v12.800 h5.100 l-8.600 8 l-8.600 -8 h5.100 z" fill="#fff" stroke="#ff0000" stroke-width="1.200" stroke-linejoin="miter"/><text x="1059.300" y="242.300" font-size="23.500" fill="#000">???</text><path d="M1049 102h10l-5 5z" fill="#c8c8c8"/><path d="M4.500 101.500H1317.500V667.500H4.500Z" stroke="#000" stroke-width="1" fill="none" shape-rendering="crispEdges"/><path d="M1318 103.5h2M1318 136.5h2M1318 169.5h2M1318 202.5h2M1318 235.5h2M1318 268.5h2M1318 301.5h2M1318 334.5h2M1318 367.5h2M1318 400.5h2M1318 433.5h2M1318 466.5h2M1318 499.5h2M1318 532.5h2M1318 565.5h2M1318 598.5h2M1318 631.5h2M1318 664.5h2M5.5 668v3M69.5 668v3M133.5 668v3M197.5 668v3M261.5 668v3M325.5 668v3M389.5 668v3M453.5 668v3M517.5 668v3M581.5 668v3M645.5 668v3M709.5 668v3M773.5 668v3M837.5 668v3M901.5 668v3M965.5 668v3M1029.5 668v3" stroke="#000" stroke-width="1" shape-rendering="crispEdges"/><rect x="1319" y="162" width="41" height="11" fill="#0000ff"/><rect x="1319" y="245" width="41" height="11" fill="#0000ff"/><text x="1323.500" y="271.500" font-size="10" textLength="32" lengthAdjust="spacing" fill="#000">146.020</text><rect x="1319" y="266" width="41" height="11" fill="#000"/><path d="M8 108h7l-3.500 4z" fill="#000"/></svg>
<div class="t ax" style="letter-spacing:-0.45px;left:1323px;top:99px">148.020</div>
<div class="t ax" style="letter-spacing:-0.45px;left:1323px;top:132px">147.620</div>
<div class="t ax" style="letter-spacing:-0.45px;left:1323px;top:198px">146.820</div>
<div class="t ax" style="letter-spacing:-0.45px;left:1323px;top:231px">146.420</div>
<div class="t ax" style="letter-spacing:-0.45px;left:1323px;top:297px">145.620</div>
<div class="t ax" style="letter-spacing:-0.45px;left:1323px;top:330px">145.220</div>
<div class="t ax" style="letter-spacing:-0.45px;left:1323px;top:363px">144.820</div>
<div class="t ax" style="letter-spacing:-0.45px;left:1323px;top:396px">144.420</div>
<div class="t ax" style="letter-spacing:-0.45px;left:1323px;top:429px">144.010</div>
<div class="t ax" style="letter-spacing:-0.45px;left:1323px;top:462px">143.610</div>
<div class="t ax" style="letter-spacing:-0.45px;left:1323px;top:495px">143.210</div>
<div class="t ax" style="letter-spacing:-0.45px;left:1323px;top:528px">142.810</div>
<div class="t ax" style="letter-spacing:-0.45px;left:1323px;top:561px">142.410</div>
<div class="t ax" style="letter-spacing:-0.45px;left:1323px;top:594px">142.010</div>
<div class="t ax" style="letter-spacing:-0.45px;left:1323px;top:627px">141.610</div>
<div class="t ax" style="letter-spacing:-0.45px;left:1323px;top:660px">141.210</div>
<div class="t ax" style="letter-spacing:-0.45px;left:1323px;top:164px;color:#fff">147.238</div>
<div class="t ax" style="letter-spacing:-0.45px;left:1323px;top:247px;color:#fff">146.225</div>
<div class="t ax" style="letter-spacing:-0.45px;left:1323px;top:268px;color:#fff">145.973</div>
<div class="t ax" style="letter-spacing:-0.27px;left:5px;top:673px">11 Nov 2014</div>
<div class="t ax" style="letter-spacing:-0.15px;left:68px;top:673px">11 Nov 08:00</div>
<div class="t ax" style="letter-spacing:-0.15px;left:132px;top:673px">11 Nov 16:00</div>
<div class="t ax" style="letter-spacing:-0.21px;left:196px;top:673px">12 Nov 00:00</div>
<div class="t ax" style="letter-spacing:-0.21px;left:260px;top:673px">12 Nov 08:00</div>
<div class="t ax" style="letter-spacing:-0.21px;left:324px;top:673px">12 Nov 16:00</div>
<div class="t ax" style="letter-spacing:-0.21px;left:388px;top:673px">13 Nov 00:00</div>
<div class="t ax" style="letter-spacing:-0.21px;left:452px;top:673px">13 Nov 08:00</div>
<div class="t ax" style="letter-spacing:-0.21px;left:516px;top:673px">13 Nov 16:00</div>
<div class="t ax" style="letter-spacing:-0.21px;left:580px;top:673px">14 Nov 00:00</div>
<div class="t ax" style="letter-spacing:-0.21px;left:644px;top:673px">14 Nov 08:00</div>
<div class="t ax" style="letter-spacing:-0.21px;left:708px;top:673px">14 Nov 16:00</div>
<div class="t ax" style="letter-spacing:-0.21px;left:772px;top:673px">17 Nov 00:00</div>
<div class="t ax" style="letter-spacing:-0.21px;left:836px;top:673px">17 Nov 08:00</div>
<div class="t ax" style="letter-spacing:-0.21px;left:900px;top:673px">17 Nov 16:00</div>
<div class="t ax" style="letter-spacing:-0.21px;left:964px;top:673px">18 Nov 00:00</div>
<div class="t ax" style="letter-spacing:-0.21px;left:1028px;top:673px">18 Nov 08:00</div>
<div class="t ax" style="letter-spacing:-0.4px;left:20px;top:106px">EURJPYh,H1&nbsp; 145.755 145.988 145.752 145.973</div>
<div class="t tab" style="letter-spacing:-0.51px;left:13px">USDCHFh,H1</div>
<div class="t tab" style="letter-spacing:-0.67px;left:98px">GBPUSDh,H1</div>
<div class="t tab" style="letter-spacing:-0.56px;left:183px">USDJPYh,H1</div>
<div class="t tab" style="letter-spacing:-0.57px;left:265px">EURUSDh,H1</div>
<div class="abs" style="left:88px;top:690px;width:1px;height:13px;background:#808080"></div>
<div class="abs" style="left:172px;top:690px;width:1px;height:13px;background:#808080"></div>
<div class="abs" style="left:256px;top:690px;width:1px;height:13px;background:#808080"></div>
<div class="abs" style="left:340px;top:686px;width:84px;height:20px;background:#fff;border:1px solid #000;border-top:none;border-right:2px solid #000;border-bottom:2px solid #000"></div>
<div class="t" style="letter-spacing:-0.46px;left:351px;top:691px;font-size:11px;color:#000">EURJPYh,H1</div>
<svg class="abs" style="left:1335px;top:691px" width="26" height="12" viewBox="0 0 26 12"><path d="M7 3.500v6l-4 -3z M20 3.500v6l4 -3z" fill="#9a9a9a"/></svg>
<div class="abs" style="left:0;top:707px;width:1366px;height:1px;background:#fff"></div>
<div class="t" style="letter-spacing:-0.03px;left:2px;top:714px;font-size:11.5px">Для справки, нажмите F1</div>
<div class="t" style="letter-spacing:0.22px;left:646px;top:714px;font-size:11.5px">Default</div>
<div class="t" style="letter-spacing:-0.06px;left:1275px;top:714px;font-size:11.5px">2228/0 kb</div>
<div class="abs" style="left:640px;top:711px;width:2px;height:16px;background:linear-gradient(90deg,#a0a0a0 50%,#fff 50%)"></div>
<div class="abs" style="left:756px;top:711px;width:2px;height:16px;background:linear-gradient(90deg,#a0a0a0 50%,#fff 50%)"></div>
<div class="abs" style="left:858px;top:711px;width:2px;height:16px;background:linear-gradient(90deg,#a0a0a0 50%,#fff 50%)"></div>
<div class="abs" style="left:929px;top:711px;width:2px;height:16px;background:linear-gradient(90deg,#a0a0a0 50%,#fff 50%)"></div>
<div class="abs" style="left:1000px;top:711px;width:2px;height:16px;background:linear-gradient(90deg,#a0a0a0 50%,#fff 50%)"></div>
<div class="abs" style="left:1068px;top:711px;width:2px;height:16px;background:linear-gradient(90deg,#a0a0a0 50%,#fff 50%)"></div>
<div class="abs" style="left:1138px;top:711px;width:2px;height:16px;background:linear-gradient(90deg,#a0a0a0 50%,#fff 50%)"></div>
<div class="abs" style="left:1204px;top:711px;width:2px;height:16px;background:linear-gradient(90deg,#a0a0a0 50%,#fff 50%)"></div>
<svg class="abs" style="left:0;top:713px" width="1366" height="12" viewBox="0 0 1366 12"><rect x="1210" y="0" width="2" height="9" fill="#4a7000"/><rect x="1210" y="10" width="2" height="2" fill="#8b0000"/><rect x="1213" y="0" width="2" height="8" fill="#4a7000"/><rect x="1213" y="9" width="2" height="3" fill="#8b0000"/><rect x="1216" y="0" width="2" height="7" fill="#4a7000"/><rect x="1216" y="8" width="2" height="4" fill="#8b0000"/><rect x="1219" y="0" width="2" height="6" fill="#4a7000"/><rect x="1219" y="7" width="2" height="5" fill="#8b0000"/><rect x="1222" y="0" width="2" height="5" fill="#4a7000"/><rect x="1222" y="6" width="2" height="6" fill="#8b0000"/><rect x="1225" y="0" width="2" height="4" fill="#4a7000"/><rect x="1225" y="5" width="2" height="7" fill="#8b0000"/><rect x="1228" y="0" width="2" height="3" fill="#4a7000"/><rect x="1228" y="4" width="2" height="8" fill="#8b0000"/><rect x="1231" y="0" width="2" height="2" fill="#4a7000"/><rect x="1231" y="3" width="2" height="9" fill="#8b0000"/></svg>
</body></html>
